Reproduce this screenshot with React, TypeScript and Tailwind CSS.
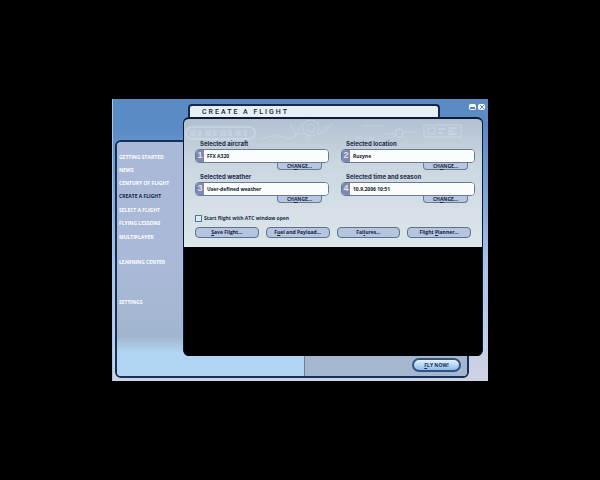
import { useState } from "react";

const NAV = [
  { label: "GETTING STARTED", gap: "" },
  { label: "NEWS", gap: "" },
  { label: "CENTURY OF FLIGHT", gap: "" },
  { label: "CREATE A FLIGHT", gap: "" },
  { label: "SELECT A FLIGHT", gap: "mt-px" },
  { label: "FLYING LESSONS", gap: "" },
  { label: "MULTIPLAYER", gap: "mt-px" },
  { label: "LEARNING CENTER", gap: "mt-3" },
  { label: "SETTINGS", gap: "mt-[27px]" },
];

const FIELDS = [
  { id: "aircraft", label: "Selected aircraft", value: "FFX A320" },
  { id: "location", label: "Selected location", value: "Ruzyne" },
  { id: "weather", label: "Selected weather", value: "User-defined weather" },
  { id: "time", label: "Selected time and season", value: "10.9.2006 10:51" },
];

const ACTIONS = [
  { before: "", key: "S", after: "ave Flight..." },
  { before: "F", key: "u", after: "el and Payload..." },
  { before: "Fai", key: "l", after: "ures..." },
  { before: "Flight ", key: "P", after: "lanner..." },
];

// Faint cockpit outlines behind the panel heading
function PanelArt() {
  return (
    <svg className="pointer-events-none absolute top-0 left-0 h-6 w-full" viewBox="0 0 298 24" fill="none" stroke="#e6eef3" strokeWidth="1" opacity="0.4" aria-hidden="true">
      <rect x="2" y="8" width="69" height="12" rx="6" strokeWidth="1.5" />
      <path d="M6 14h58" strokeWidth="6" strokeDasharray="6 2 4 3" opacity="0.5" />
      <path d="M78 20l9-3h10l8 3 12-6 7 2v6M106 5l7 13M119 4l-10 15M134 16l10-9M148 4l-8 10M178 7h22M170 19h20" opacity="0.7" />
      <circle cx="127" cy="9" r="8" opacity="0.7" />
      <circle cx="127" cy="9" r="4" opacity="0.7" />
      <circle cx="215" cy="14" r="4" />
      <path d="M200 15h11M219 13h14" opacity="0.7" />
      <rect x="240" y="6" width="37" height="12" />
      <rect x="244" y="9" width="7" height="6" />
      <path d="M254 10h7M254 14h5M264 9h9M264 12h6M264 15h9" strokeWidth="1.5" />
    </svg>
  );
}

export default function App() {
  const [atc, setAtc] = useState(false);

  return (
    <div className="flex min-h-screen items-center bg-black px-28 font-['Open_Sans',sans-serif]">
      <div className="grid w-full grid-cols-[68px_1fr_14px] grid-rows-[18px_23px_auto_22px] border-l border-[#a9c6e8] bg-linear-to-b from-[#5b8bc5] from-10% via-[#a9c5e8] via-60% to-[#d0d3e3] pr-[5px] pb-[3px] pl-0.5">
        {/* Tab and window buttons */}
        <div className="col-span-2 col-start-2 row-start-1 flex items-start justify-between pt-[5px] pl-[5px]">
          <h1 className="h-[14px] w-[252px] rounded-t border-2 border-b-0 border-[#13294f] bg-[#e6eff3] pl-3 font-[Roboto,sans-serif] text-[7px] leading-[13px] font-medium tracking-[2px] text-[#152238]">
            CREATE A FLIGHT
          </h1>
          <div className="-mr-0.5 flex gap-0.5">
            <button aria-label="Minimize" className="flex h-[6px] w-[7px] items-end justify-center rounded-xs bg-white pb-px">
              <span className="h-0.5 w-[5px] bg-[#5684bd]" />
            </button>
            <button aria-label="Close" className="flex h-[6px] w-[7px] items-center justify-center rounded-xs bg-white">
              <svg className="h-1 w-1" viewBox="0 0 4 4" stroke="#5684bd" aria-hidden="true"><path d="M0 0l4 4M4 0l-4 4" /></svg>
            </button>
          </div>
        </div>

        {/* Back panel: navigation on the left, launch bar at the bottom */}
        <div className="col-span-2 col-start-1 row-span-2 row-start-3 grid grid-cols-[188px_1fr] overflow-hidden rounded-md border-2 border-[#17305a]">
          <nav className="flex flex-col border-r border-[#6482a8] bg-linear-to-b from-[#abb9d8] from-50% via-[#a1b6ce] via-83% to-[#b1d5f2] to-90% pt-[9px] pl-0.5">
            {NAV.map((item) => (
              <a
                key={item.label}
                href="#"
                className={`text-[5px] leading-[13px] font-bold whitespace-nowrap ${item.gap} ${item.label === "CREATE A FLIGHT" ? "text-[#101c3c]" : "text-white"}`}
              >
                {item.label}
              </a>
            ))}
          </nav>
          <div className="flex items-end justify-end bg-[#a5b7ce] pr-[6px] pb-1">
            <button className="h-[14px] w-[49px] rounded-full border-2 border-[#315580] bg-linear-to-b from-[#e2f3ff] to-[#8fbbe9] text-center text-[5px] leading-[10px] font-bold text-[#152a50]">
              <u>F</u>LY NOW!
            </button>
          </div>
        </div>

        {/* Main panel */}
        <main className="relative col-span-2 col-start-2 row-span-2 row-start-2 flex flex-col overflow-hidden rounded-md border-t-2 border-r border-l border-[#0b1a38] bg-black">
          <div className="relative bg-linear-to-b from-[#b3c1d2] via-[#cbd7e0] via-35% to-[#dce7eb] pt-5 pr-[7px] pb-[9px] pl-[11px]">
            <PanelArt />
            <div className="grid grid-cols-2 gap-x-3">
              {FIELDS.map((f, i) => (
                <div key={f.id} className="flex flex-col">
                  <label htmlFor={f.id} className="h-[10px] pl-[5px] font-[Inter,sans-serif] text-[6px] leading-[10px] font-bold text-[#1c2d4a]">
                    {f.label}
                  </label>
                  <div className="flex h-[14px] overflow-hidden rounded border border-[#67799b] bg-white">
                    <span className="flex w-2 items-center justify-center bg-[#8088ad] font-['Liberation_Sans',sans-serif] text-[9px] font-bold text-[#dce2ee]">{i + 1}</span>
                    <input id={f.id} readOnly value={f.value} className="min-w-0 flex-1 bg-[#fbfdfc] pl-[3px] text-[5px] leading-3 font-bold text-[#10182a] outline-none" />
                  </div>
                  <button className="mr-[7px] mb-0.5 h-[7px] w-[45px] self-end rounded-b border border-t-0 border-[#67799b] bg-[#b9c7de] text-center text-[5px] leading-[6px] font-bold text-[#152240]">
                    CH<u>A</u>NGE...
                  </button>
                </div>
              ))}
            </div>
            <label className="mt-2 flex items-center gap-0.5 text-[5px] leading-[10px] font-bold text-[#1c2d4a]">
              <input type="checkbox" checked={atc} onChange={(e) => setAtc(e.target.checked)} className="size-[7px] appearance-none border border-[#4f7598] bg-[#dcebf2] checked:bg-[#4f7598]" />
              Start flight with ATC window open
            </label>
            <div className="mt-1 mr-1 grid grid-cols-4 gap-[7px]">
              {ACTIONS.map((a) => (
                <button key={a.key} className="h-[11px] rounded border border-[#5c7094] bg-[#b6c5de] text-center text-[5px] leading-[9px] font-bold whitespace-nowrap text-[#152240]">
                  {a.before}<u>{a.key}</u>{a.after}
                </button>
              ))}
            </div>
          </div>
          <div className="h-[109px] bg-black" />
        </main>
      </div>
    </div>
  );
}
